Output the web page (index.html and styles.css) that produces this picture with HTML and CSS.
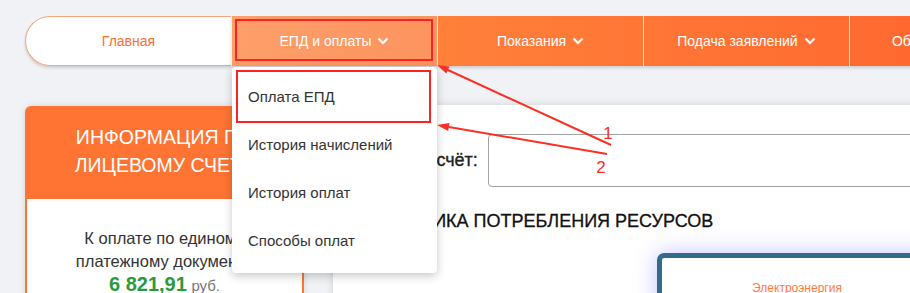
FILE: index.html
```html
<html><head>
<meta charset="utf-8">
<title>Личный кабинет</title>
<link rel="stylesheet" href="styles.css">
</head>
<body>
<div class="page">
    <nav class="menu">
        <a class="menu-home">Главная</a>
        <div class="menu-tabs">
            <div class="menu-item active">
                <span>ЕПД и оплаты</span>
                <svg class="chevron" width="12" height="8" viewBox="0 0 12 8"><path d="M1.5 1.5 L6 6 L10.5 1.5"/></svg>
                <ul class="submenu">
                    <li>Оплата ЕПД</li>
                    <li>История начислений</li>
                    <li>История оплат</li>
                    <li>Способы оплат</li>
                </ul>
            </div>
            <div class="menu-item">
                <span>Показания</span>
                <svg class="chevron" width="12" height="8" viewBox="0 0 12 8"><path d="M1.5 1.5 L6 6 L10.5 1.5"/></svg>
            </div>
            <div class="menu-item">
                <span>Подача заявлений</span>
                <svg class="chevron" width="12" height="8" viewBox="0 0 12 8"><path d="M1.5 1.5 L6 6 L10.5 1.5"/></svg>
            </div>
            <div class="menu-item">
                <span>Обратная связь</span>
                <svg class="chevron" width="12" height="8" viewBox="0 0 12 8"><path d="M1.5 1.5 L6 6 L10.5 1.5"/></svg>
            </div>
        </div>
    </nav>

    <div class="content">
        <aside class="account-card">
            <div class="account-head">Информация по<br>лицевому счету</div>
            <div class="account-body">
                К оплате по единому<br>платежному документу<br>
                <span class="amount">6 821,91</span> <span class="currency">руб.</span>
            </div>
        </aside>

        <main class="panel">
            <div class="account-row">
                <label class="account-label">Лицевой счёт:</label>
                <div class="account-input"></div>
            </div>
            <h2 class="section-title">Динамика потребления ресурсов</h2>
            <div class="resource-cards">
                <div class="resource-card">Электроэнергия</div>
            </div>
        </main>
    </div>
</div>

<!-- пометки поверх скриншота -->
<svg class="marks" width="910" height="293" viewBox="0 0 910 293">
    <rect x="236" y="20" width="196" height="40"/>
    <rect x="237" y="71" width="193" height="51"/>
    <line x1="611" y1="145" x2="447.9" y2="70"/>
    <polygon points="437,65 449.6,66.4 446.2,73.6"/>
    <line x1="607" y1="154" x2="448.8" y2="127"/>
    <polygon points="437,125 449.5,123.1 448.2,131"/>
    <text x="608" y="139">1</text>
    <text x="601" y="173">2</text>
</svg>
</body>
</html>
```

FILE: styles.css
```css
* {
    box-sizing: border-box;
}
body {
    margin: 0;
    background-color: #f1f2f5;
    font-family: "Liberation Sans", Arial, sans-serif;
    color: #333;
    overflow: hidden;
}
.page {
    width: 1400px;
    padding: 16px 0 0 25px;
}

/* menu */
.menu {
    display: flex;
    height: 50px;
}
.menu-home {
    width: 206px;
    display: flex;
    align-items: center;
    justify-content: center;
    background-color: white;
    color: #ff6e33;
    font-size: 14px;
    border: 1px solid #f6a57c;
    border-right: none;
    border-radius: 25px 0 0 25px;
    box-shadow: 0 2px 3px rgba(0, 0, 0, 0.15);
}
.menu-tabs {
    display: flex;
    flex: 1;
    background: linear-gradient(to right, #ff8a3e, #ff5226);
    box-shadow: 0 2px 3px rgba(0, 0, 0, 0.15);
}
.menu-item {
    position: relative;
    width: 206px;
    display: flex;
    align-items: center;
    justify-content: center;
    gap: 6px;
    color: white;
    font-size: 14px;
    border-left: 1px solid rgba(255, 255, 255, 0.8);
}
.menu-item.active {
    background: linear-gradient(to right, #fe9e68, #fd9460);
}
.chevron path {
    fill: none;
    stroke: white;
    stroke-width: 2.2;
}
.submenu {
    position: absolute;
    top: 51px;
    left: 0;
    width: 205px;
    margin: 0;
    padding: 6px 0 8px;
    list-style: none;
    background-color: white;
    border-radius: 4px;
    box-shadow: 0 3px 10px rgba(0, 0, 0, 0.22);
    z-index: 5;
}
.submenu li {
    height: 48px;
    line-height: 48px;
    padding-left: 16px;
    font-size: 15px;
    color: #333;
}

/* content */
.content {
    display: flex;
    gap: 29px;
    margin-top: 39px;
}
.account-card {
    width: 279px;
    flex: none;
    margin-top: 1px;
    border-radius: 6px 6px 0 0;
    overflow: hidden;
    box-shadow: 0 0 6px rgba(0, 0, 0, 0.12);
}
.account-head {
    background-color: #ff7433;
    color: white;
    font-size: 19.5px;
    line-height: 28px;
    text-transform: uppercase;
    text-align: center;
    padding: 17px 4px 20px;
    white-space: nowrap;
}
.account-body {
    background-color: white;
    border: 2px solid #ff7433;
    border-top: none;
    padding: 28px 6px 30px;
    font-size: 16.5px;
    line-height: 23px;
    text-align: center;
    white-space: nowrap;
}
.amount {
    color: #2c9a3a;
    font-weight: bold;
    font-size: 20px;
}
.currency {
    color: #777;
    font-size: 15px;
}

.panel {
    width: 900px;
    min-height: 300px;
    background-color: white;
    padding: 29px 0 0 27px;
    box-shadow: 0 0 8px rgba(0, 0, 0, 0.13);
}
.account-row {
    display: flex;
    align-items: center;
    gap: 13px;
}
.account-label {
    width: 115px;
    flex: none;
    white-space: nowrap;
    text-align: right;
    font-size: 18px;
    color: #222;
    -webkit-text-stroke: 0.35px #222;
}
.account-input {
    flex: 1;
    height: 53px;
    border: 1px solid #a2a2a2;
    border-radius: 4px;
}
.section-title {
    margin: 23px 0 0 8px;
    font-size: 18px;
    line-height: 22px;
    font-weight: normal;
    text-transform: uppercase;
    color: #111;
    -webkit-text-stroke: 0.3px #111;
}
.resource-cards {
    display: flex;
    margin-top: 21px;
    padding-left: 297px;
}
.resource-card {
    width: 280px;
    height: 120px;
    padding-top: 23px;
    border: 5px solid #336b8a;
    border-radius: 7px;
    box-shadow: 0 0 22px rgba(110, 110, 255, 0.4);
    text-align: center;
    font-size: 12px;
    line-height: 14px;
    color: #ff7a40;
}

/* annotations */
.marks {
    position: absolute;
    top: 0;
    left: 0;
    pointer-events: none;
    z-index: 10;
}
.marks rect {
    fill: none;
    stroke: #fa2222;
    stroke-width: 2;
}
.marks line {
    stroke: #fa3026;
    stroke-width: 2;
}
.marks polygon {
    fill: #fa3026;
}
.marks text {
    fill: #fa3026;
    font-family: "Liberation Sans", Arial, sans-serif;
    font-size: 17px;
    text-anchor: middle;
}
```
